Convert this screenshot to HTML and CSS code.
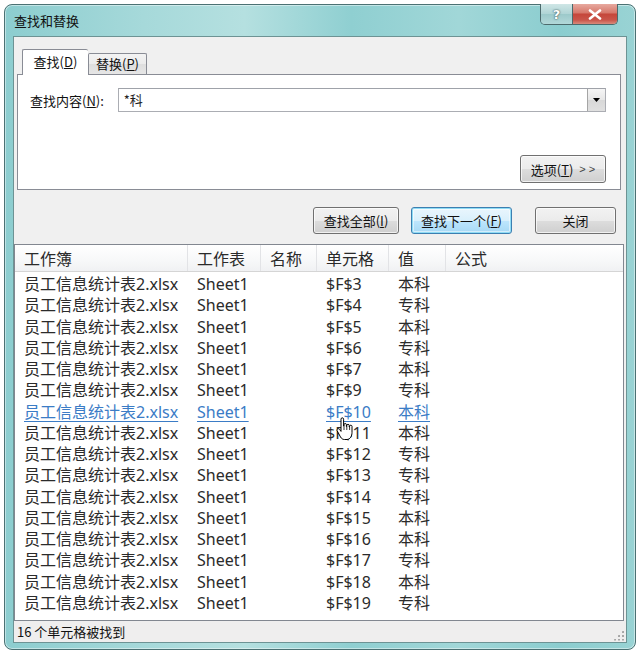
FILE: index.html
```html
<!DOCTYPE html>
<html lang="zh-CN">
<head>
<meta charset="utf-8">
<title>查找和替换</title>
<link rel="stylesheet" href="styles.css">
</head>
<body>
<div class="window">
  <div class="titlebar">
    <span class="title">查找和替换</span>
    <div class="caption">
      <span class="cbtn help">?</span>
      <span class="cbtn close"><svg width="14" height="11" viewBox="0 0 14 11"><path d="M2 1.5 L12 9.5 M12 1.5 L2 9.5" stroke="#fff" stroke-width="2.6" stroke-linecap="round"/></svg></span>
    </div>
  </div>
  <div class="client">
    <div class="tabs">
      <div class="tab active">查找(<u>D</u>)</div>
      <div class="tab">替换(<u>P</u>)</div>
    </div>
    <div class="panel">
      <div class="find-row">
        <span class="label">查找内容(<u>N</u>):</span>
        <div class="combo"><span class="combo-text">*科</span><span class="drop"><svg width="7" height="4" viewBox="0 0 7 4"><path d="M0 0 H7 L3.5 4 Z" fill="#000"/></svg></span></div>
      </div>
      <div class="options-row"><span class="btn options">选项(<u>T</u>)<span class="more">&gt; &gt;</span></span></div>
    </div>
    <div class="actions">
      <span class="btn w86">查找全部(<u>I</u>)</span>
      <span class="btn w101 default">查找下一个(<u>F</u>)</span>
      <span class="btn w81 gap">关闭</span>
    </div>
    <div class="list">
      <div class="list-head">
        <span class="c1">工作簿</span><span class="c2">工作表</span><span class="c3">名称</span><span class="c4">单元格</span><span class="c5">值</span><span class="c6">公式</span>
      </div>
      <div class="rows">
        <div class="row"><span class="c1">员工信息统计表2.xlsx</span><span class="c2">Sheet1</span><span class="c3"></span><span class="c4">$F$3</span><span class="c5">本科</span></div>
        <div class="row"><span class="c1">员工信息统计表2.xlsx</span><span class="c2">Sheet1</span><span class="c3"></span><span class="c4">$F$4</span><span class="c5">专科</span></div>
        <div class="row"><span class="c1">员工信息统计表2.xlsx</span><span class="c2">Sheet1</span><span class="c3"></span><span class="c4">$F$5</span><span class="c5">本科</span></div>
        <div class="row"><span class="c1">员工信息统计表2.xlsx</span><span class="c2">Sheet1</span><span class="c3"></span><span class="c4">$F$6</span><span class="c5">专科</span></div>
        <div class="row"><span class="c1">员工信息统计表2.xlsx</span><span class="c2">Sheet1</span><span class="c3"></span><span class="c4">$F$7</span><span class="c5">本科</span></div>
        <div class="row"><span class="c1">员工信息统计表2.xlsx</span><span class="c2">Sheet1</span><span class="c3"></span><span class="c4">$F$9</span><span class="c5">专科</span></div>
        <div class="row hot"><span class="c1"><a>员工信息统计表2.xlsx</a></span><span class="c2"><a>Sheet1</a></span><span class="c3"></span><span class="c4"><a>$F$10</a></span><span class="c5"><a>本科</a></span></div>
        <div class="row"><span class="c1">员工信息统计表2.xlsx</span><span class="c2">Sheet1</span><span class="c3"></span><span class="c4">$F$11</span><span class="c5">本科</span></div>
        <div class="row"><span class="c1">员工信息统计表2.xlsx</span><span class="c2">Sheet1</span><span class="c3"></span><span class="c4">$F$12</span><span class="c5">专科</span></div>
        <div class="row"><span class="c1">员工信息统计表2.xlsx</span><span class="c2">Sheet1</span><span class="c3"></span><span class="c4">$F$13</span><span class="c5">专科</span></div>
        <div class="row"><span class="c1">员工信息统计表2.xlsx</span><span class="c2">Sheet1</span><span class="c3"></span><span class="c4">$F$14</span><span class="c5">专科</span></div>
        <div class="row"><span class="c1">员工信息统计表2.xlsx</span><span class="c2">Sheet1</span><span class="c3"></span><span class="c4">$F$15</span><span class="c5">本科</span></div>
        <div class="row"><span class="c1">员工信息统计表2.xlsx</span><span class="c2">Sheet1</span><span class="c3"></span><span class="c4">$F$16</span><span class="c5">本科</span></div>
        <div class="row"><span class="c1">员工信息统计表2.xlsx</span><span class="c2">Sheet1</span><span class="c3"></span><span class="c4">$F$17</span><span class="c5">专科</span></div>
        <div class="row"><span class="c1">员工信息统计表2.xlsx</span><span class="c2">Sheet1</span><span class="c3"></span><span class="c4">$F$18</span><span class="c5">本科</span></div>
        <div class="row"><span class="c1">员工信息统计表2.xlsx</span><span class="c2">Sheet1</span><span class="c3"></span><span class="c4">$F$19</span><span class="c5">专科</span></div>
      </div>
      <svg class="cursor" width="18" height="24" viewBox="0 0 18 24"><path d="M5 2.2 C5 1.3 5.6 0.8 6.3 0.8 C7 0.8 7.6 1.3 7.6 2.2 V9 H8 V7.6 C8 6.9 8.5 6.5 9.2 6.5 C9.9 6.5 10.4 6.9 10.4 7.6 V9.6 H10.8 V8.4 C10.8 7.7 11.3 7.3 12 7.3 C12.7 7.3 13.2 7.7 13.2 8.4 V10 H13.6 V9.3 C13.6 8.6 14.1 8.2 14.8 8.2 C15.5 8.2 16 8.6 16 9.3 V15.5 C16 19 14 22.5 11 22.5 H8.5 C6.5 22.5 5.5 21.5 4.5 20 L1.2 13.8 C0.8 13.1 1 12.3 1.7 11.9 C2.4 11.5 3.2 11.8 3.6 12.4 L5 14.4 Z" fill="#fff" stroke="#000" stroke-width="1" stroke-linejoin="round"/><path d="M8 9 V13 M10.8 9.6 V13 M13.6 10 V13" stroke="#000" stroke-width="0.8"/></svg>
    </div>
    <div class="status"><span>16 个单元格被找到</span><span class="grip"></span></div>
  </div>
</div>
</body>
</html>
```

FILE: styles.css
```css
html, body {
  margin: 0;
  padding: 0;
  background: #ffffff;
}
body {
  font-family: "Noto Sans", "Noto Sans CJK SC", sans-serif;
  color: #1e1e1e;
}
.window {
  margin: 4px 0 0 4px;
  width: 632px;
  height: 646px;
  box-sizing: border-box;
  border: 1px solid #4b7173;
  border-radius: 8px;
  padding: 0 8px 6px 8px;
  display: flex;
  flex-direction: column;
  background: linear-gradient(90deg, #8ccdcf 0%, #a6d9da 22%, #b5e0e0 38%, #8fcfd1 55%, #a1d7d8 72%, #8bcdcf 88%, #99d3d4 100%);
  box-shadow: inset 0 0 0 1px rgba(255,255,255,0.45);
}
.titlebar {
  height: 31px;
  display: flex;
  align-items: flex-start;
  flex-shrink: 0;
}
.title {
  font-family: "Noto Sans CJK SC", sans-serif;
  font-size: 13px;
  line-height: 31px;
  padding-left: 1px;
  color: #111;
}
.caption {
  margin-left: auto;
  margin-right: 9px;
  margin-top: -1px;
  display: flex;
  border: 1px solid #4c6a6c;
  border-top: none;
  border-radius: 0 0 5px 5px;
  overflow: hidden;
  height: 20px;
}
.cbtn {
  display: flex;
  align-items: center;
  justify-content: center;
  height: 20px;
}
.help {
  width: 31px;
  border-right: 1px solid #4c6a6c;
  background: linear-gradient(#cfe6e6, #afd4d5 50%, #9cc9ca 51%, #b2d8d9);
  color: #ffffff;
  font-family: "DejaVu Sans", sans-serif;
  font-weight: bold;
  font-size: 13px;
  text-shadow: 0 0 1px #3e5a5c, 0 0 2px #3e5a5c;
}
.close {
  width: 44px;
  background: linear-gradient(#e7a99f, #d6776a 45%, #c5463a 50%, #c9554a 80%, #d98a7b);
}
.client {
  flex: 1;
  display: flex;
  flex-direction: column;
  background: #f0f0f0;
  border: 1px solid #6d9394;
  min-height: 0;
}
.tabs {
  display: flex;
  align-items: flex-end;
  height: 24px;
  margin-top: 13px;
  padding-left: 8px;
  position: relative;
  z-index: 1;
}
.tab {
  font-family: "Noto Sans CJK SC", sans-serif;
  font-size: 13px;
  color: #111;
  height: 21px;
  line-height: 20px;
  width: 59px;
  box-sizing: border-box;
  text-align: center;
  border: 1px solid #898c95;
  border-bottom: none;
  background: linear-gradient(#f3f3f3, #ebebeb 50%, #dedede 51%, #e6e6e6);
  border-radius: 2px 2px 0 0;
}
.tab.active {
  width: 66px;
  height: 26px;
  line-height: 24px;
  margin-bottom: -1px;
  background: #ffffff;
  border-right: none;
}
.panel {
  margin-left: 3px;
  width: 604px;
  height: 116px;
  box-sizing: border-box;
  border: 1px solid #898c95;
  background: #ffffff;
  display: flex;
  flex-direction: column;
  padding: 13px 14px 6px 12px;
}
.find-row {
  display: flex;
  align-items: center;
  height: 24px;
}
.label {
  font-family: "Noto Sans CJK SC", sans-serif;
  font-size: 13px;
  width: 88px;
  color: #111;
}
.combo {
  width: 490px;
  height: 24px;
  box-sizing: border-box;
  border: 1px solid #abadb3;
  border-top-color: #9fa2a9;
  display: flex;
  align-items: stretch;
}
.combo-text {
  flex: 1;
  font-family: "Noto Sans CJK SC", sans-serif;
  font-size: 13px;
  line-height: 22px;
  padding-left: 5px;
}
.drop {
  width: 18px;
  box-sizing: border-box;
  border-left: 1px solid #a5a5a5;
  background: linear-gradient(#f6f6f6, #e6e6e6 50%, #d8d8d8 51%, #e0e0e0);
  display: flex;
  align-items: center;
  justify-content: center;
}
.options-row {
  margin-top: auto;
  display: flex;
  justify-content: flex-end;
}
.btn {
  display: inline-flex;
  align-items: center;
  justify-content: center;
  height: 27px;
  box-sizing: border-box;
  border: 1px solid #707070;
  border-radius: 3px;
  background: linear-gradient(#f2f2f2, #ebebeb 50%, #dddddd 51%, #cfcfcf);
  box-shadow: inset 0 0 0 1px rgba(255,255,255,0.7);
  font-family: "Noto Sans CJK SC", sans-serif;
  font-size: 13px;
  color: #111;
  white-space: nowrap;
}
.options {
  width: 86px;
  height: 28px;
}
.more {
  margin-left: 6px;
  font-family: "Liberation Sans", sans-serif;
  font-size: 11px;
  color: #444;
}
.actions {
  display: flex;
  justify-content: flex-end;
  margin-top: 17px;
  padding-right: 10px;
  gap: 12px;
}
.w86 { width: 86px; }
.w101 { width: 101px; }
.w81 { width: 81px; }
.gap { margin-left: 11px; }
.btn.default {
  border-color: #3c7fb1;
  background: linear-gradient(#eaf6fd, #d9f0fc 50%, #bee6fd 51%, #a7d9f5);
  box-shadow: inset 0 0 0 1px #8fdcf5, inset 0 0 0 2px rgba(255,255,255,0.5);
}
.list {
  position: relative;
  flex: 1;
  margin-top: 10px;
  margin-right: 2px;
  border: 1px solid #828790;
  background: #ffffff;
  min-height: 0;
  overflow: hidden;
}
.list-head {
  display: flex;
  height: 27px;
  box-sizing: border-box;
  background: linear-gradient(#ffffff, #f7f8f9 60%, #f0f1f3);
  border-bottom: 1px solid #d5d5d5;
  font-size: 16px;
  line-height: 28px;
  color: #2a2a2a;
}
.list-head span {
  border-right: 1px solid #e2e3e6;
}
.list-head .c6 { border-right: none; }
.c1, .c2, .c3, .c4, .c5, .c6 {
  box-sizing: border-box;
  padding-left: 9px;
  white-space: nowrap;
  font-family: "Noto Sans", "Noto Sans CJK SC", sans-serif;
}
.c1 { width: 173px; }
.c2 { width: 73px; }
.c3 { width: 56px; }
.c4 { width: 72px; }
.c5 { width: 57px; }
.c6 { flex: 1; }
.rows {
  padding-top: 2px;
}
.row {
  display: flex;
  height: 21.25px;
  font-size: 16px;
  line-height: 21.25px;
  color: #2b2b2b;
}
.row.hot a {
  color: #3b7cc6;
  text-decoration: underline;
  text-decoration-thickness: 1px;
  text-underline-offset: 3px;
}
.cursor {
  position: absolute;
  left: 321px;
  top: 172px;
}
.status {
  height: 21px;
  flex-shrink: 0;
  display: flex;
  align-items: center;
  padding-left: 3px;
  font-family: "Noto Sans CJK SC", sans-serif;
  font-size: 13px;
  color: #111;
  background: #efeeee;
}
.grip {
  margin-left: auto;
  margin-right: 2px;
  margin-top: 7px;
  width: 11px;
  height: 11px;
  background-image: radial-gradient(circle, #a6a6a6 0.9px, transparent 1.2px);
  background-size: 4px 4px;
  clip-path: polygon(100% 0, 100% 100%, 0 100%);
}
```
